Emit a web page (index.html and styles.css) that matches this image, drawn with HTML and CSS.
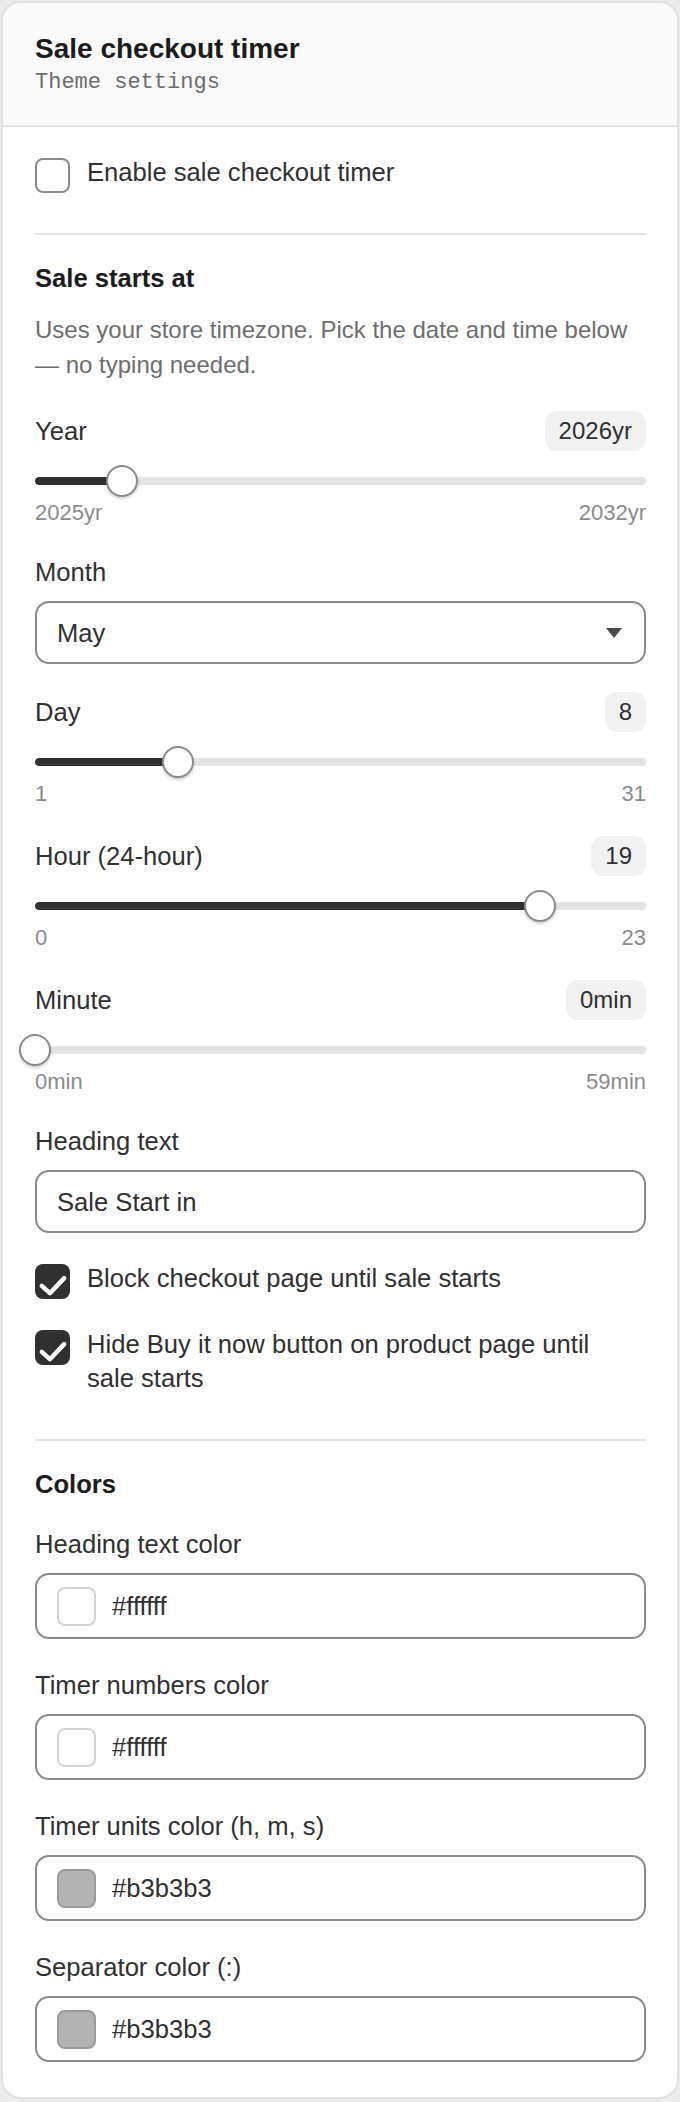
FILE: index.html
```html
<!DOCTYPE html>
<html lang="en">
<head>
<meta charset="utf-8">
<title>Sale checkout timer</title>
<link rel="stylesheet" href="styles.css">
</head>
<body>
<div class="card">
  <header class="head">
    <h1 class="title">Sale checkout timer</h1>
    <p class="subtitle">Theme settings</p>
  </header>
  <div class="body">
    <div class="check-row">
      <span class="box"></span>
      <span class="check-label">Enable sale checkout timer</span>
    </div>
    <hr class="divider first">
    <h2 class="section-title">Sale starts at</h2>
    <p class="desc">Uses your store timezone. Pick the date and time below — no typing needed.</p>
    <div class="fields">
      <div class="field">
        <div class="field-head"><span class="label">Year</span><span class="badge">2026yr</span></div>
        <div class="slider">
          <div class="track"><div class="fill" style="width:14.2857%"></div></div>
          <span class="thumb" style="left:14.2857%"></span>
        </div>
        <div class="range"><span>2025yr</span><span>2032yr</span></div>
      </div>
      <div class="field">
        <span class="label">Month</span>
        <div class="control select"><span class="value">May</span><span class="caret"></span></div>
      </div>
      <div class="field">
        <div class="field-head"><span class="label">Day</span><span class="badge">8</span></div>
        <div class="slider">
          <div class="track"><div class="fill" style="width:23.3333%"></div></div>
          <span class="thumb" style="left:23.3333%"></span>
        </div>
        <div class="range"><span>1</span><span>31</span></div>
      </div>
      <div class="field">
        <div class="field-head"><span class="label">Hour (24-hour)</span><span class="badge">19</span></div>
        <div class="slider">
          <div class="track"><div class="fill" style="width:82.6087%"></div></div>
          <span class="thumb" style="left:82.6087%"></span>
        </div>
        <div class="range"><span>0</span><span>23</span></div>
      </div>
      <div class="field">
        <div class="field-head"><span class="label">Minute</span><span class="badge">0min</span></div>
        <div class="slider">
          <div class="track"><div class="fill" style="width:0%"></div></div>
          <span class="thumb" style="left:0%"></span>
        </div>
        <div class="range"><span>0min</span><span>59min</span></div>
      </div>
      <div class="field">
        <span class="label">Heading text</span>
        <div class="control"><span class="value">Sale Start in</span></div>
      </div>
      <div class="check-row">
        <span class="box checked"><svg viewBox="0 0 36 36" width="35" height="35"><path d="M7 22.5 L15.3 30 L30 14.5" fill="none" stroke="#fff" stroke-width="4.6" stroke-linecap="round" stroke-linejoin="round"/></svg></span>
        <span class="check-label">Block checkout page until sale starts</span>
      </div>
      <div class="check-row">
        <span class="box checked"><svg viewBox="0 0 36 36" width="35" height="35"><path d="M7 22.5 L15.3 30 L30 14.5" fill="none" stroke="#fff" stroke-width="4.6" stroke-linecap="round" stroke-linejoin="round"/></svg></span>
        <span class="check-label">Hide Buy it now button on product page until sale starts</span>
      </div>
    </div>
    <hr class="divider second">
    <h2 class="section-title">Colors</h2>
    <div class="color-fields">
      <div class="field">
        <span class="label">Heading text color</span>
        <div class="control color"><span class="swatch white"></span><span class="value">#ffffff</span></div>
      </div>
      <div class="field">
        <span class="label">Timer numbers color</span>
        <div class="control color"><span class="swatch white"></span><span class="value">#ffffff</span></div>
      </div>
      <div class="field">
        <span class="label">Timer units color (h, m, s)</span>
        <div class="control color"><span class="swatch gray"></span><span class="value">#b3b3b3</span></div>
      </div>
      <div class="field">
        <span class="label">Separator color (:)</span>
        <div class="control color"><span class="swatch gray"></span><span class="value">#b3b3b3</span></div>
      </div>
    </div>
  </div>
</div>
</body>
</html>
```
FILE: styles.css
```css
html {
  background: #ebebeb;
}
body {
  margin: 0;
  padding: 1px;
  font-family: "Liberation Sans", Arial, sans-serif;
  color: #303030;
}
* {
  box-sizing: border-box;
}
.card {
  background: #fff;
  border: 2px solid #e1e1e1;
  border-radius: 20px;
  overflow: hidden;
}
.head {
  background: #fafafa;
  border-bottom: 2px solid #e1e1e1;
  padding: 29px 31px 29px 32px;
}
.title {
  margin: 0;
  font-size: 28px;
  line-height: 34px;
  font-weight: 700;
  color: #1c1c1c;
}
.subtitle {
  margin: 4px 0 0;
  font-family: "Liberation Mono", "Courier New", monospace;
  font-size: 22px;
  line-height: 26px;
  color: #6d6d6d;
}
.body {
  padding: 28px 31px 35px 32px;
}
.check-row {
  display: flex;
  align-items: flex-start;
  gap: 17px;
}
.box {
  flex: none;
  width: 35px;
  height: 35px;
  margin-top: 3px;
  border: 2px solid #8a8a8a;
  border-radius: 8px;
  background: #fff;
}
.box.checked {
  border: 0;
  background: #303030;
  display: flex;
}
.box svg {
  display: block;
}
.check-label {
  font-size: 25.6px;
  line-height: 34px;
  color: #303030;
  padding-right: 12px;
}
.divider {
  border: 0;
  height: 2px;
  background: #e3e3e3;
  margin: 0;
}
.divider.first {
  margin-top: 40px;
}
.divider.second {
  margin-top: 44px;
}
.section-title {
  margin: 26px 0 0;
  font-size: 25.6px;
  line-height: 34px;
  font-weight: 700;
  color: #1c1c1c;
}
.desc {
  margin: 17px 0 0;
  font-size: 24px;
  line-height: 35px;
  color: #6d6d6d;
}
.fields {
  margin-top: 29px;
  display: flex;
  flex-direction: column;
  gap: 28px;
}
.field {
  display: flex;
  flex-direction: column;
}
.field-head {
  display: flex;
  justify-content: space-between;
  align-items: center;
  height: 40px;
}
.label {
  font-size: 25.6px;
  line-height: 34px;
  color: #303030;
}
.badge {
  background: #f1f1f1;
  border-radius: 12px;
  padding: 6px 14px;
  font-size: 24px;
  line-height: 28px;
  color: #303030;
}
.slider {
  position: relative;
  height: 32px;
  margin-top: 14px;
  padding: 12px 0;
}
.track {
  height: 8px;
  border-radius: 4px;
  background: #e3e3e3;
  overflow: hidden;
}
.fill {
  height: 100%;
  background: #303030;
  border-radius: 4px;
}
.thumb {
  position: absolute;
  top: 0;
  width: 32px;
  height: 32px;
  margin-left: -16px;
  border-radius: 50%;
  background: #fff;
  border: 2.5px solid #8a8a8a;
  box-shadow: 0 2px 3px rgba(0, 0, 0, 0.18);
}
.range {
  display: flex;
  justify-content: space-between;
  margin-top: 2px;
  font-size: 22px;
  line-height: 28px;
  color: #8a8a8a;
}
.control {
  margin-top: 12px;
  height: 63px;
  border: 2px solid #8a8a8a;
  border-radius: 14px;
  display: flex;
  align-items: center;
  padding: 0 22px 0 20px;
}
.value {
  font-size: 25.6px;
  line-height: 34px;
  color: #303030;
}
.select {
  justify-content: space-between;
}
.caret {
  width: 0;
  height: 0;
  border-left: 8px solid transparent;
  border-right: 8px solid transparent;
  border-top: 10px solid #4a4a4a;
}
.color-fields {
  margin-top: 26px;
  display: flex;
  flex-direction: column;
  gap: 29px;
}
.control.color {
  height: 66px;
  gap: 16px;
}
.swatch {
  flex: none;
  width: 39px;
  height: 39px;
  border-radius: 8px;
}
.swatch.white {
  background: #fff;
  border: 2px solid #d3d3d3;
}
.swatch.gray {
  background: #b3b3b3;
  border: 2px solid #9a9a9a;
}
```
